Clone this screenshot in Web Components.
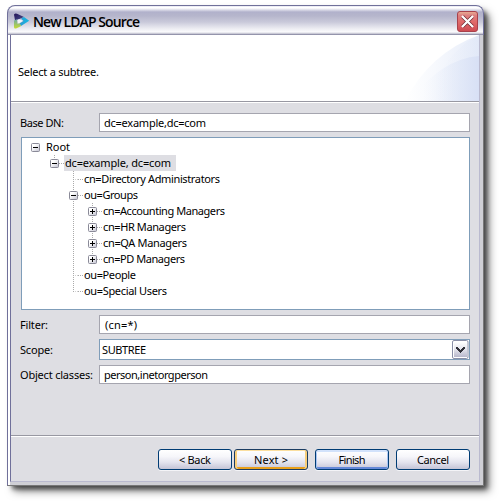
<!DOCTYPE html>
<html lang="en">
<head>
<meta charset="utf-8">
<title>New LDAP Source</title>
<style>
html,body{margin:0;height:100%;overflow:hidden;background:#fff}
body{font:11px/16px "Noto Sans","Liberation Sans",sans-serif;color:#000}
</style>
</head>
<body>
<ldap-dialog></ldap-dialog>
<script>
function define(name, html, ready) {
  const t = document.createElement('template');
  t.innerHTML = html;
  customElements.define(name, class extends HTMLElement {
    connectedCallback() {
      if (this.shadowRoot) return;
      this.attachShadow({mode: 'open'}).append(t.content.cloneNode(true));
      if (ready) ready.call(this, this.shadowRoot);
    }
  });
}

/* Text run set to a given width by adjusting its tracking. */
define('fit-text', `<style>:host{display:inline-block;white-space:pre;flex:none}span{display:inline-block}</style><span></span>`, function (r) {
  const s = r.querySelector('span'), w = +this.getAttribute('w'), text = this.getAttribute('text');
  s.textContent = text;
  const natural = s.getBoundingClientRect().width;
  s.style.letterSpacing = ((w - natural) / (text.length - 1)) + 'px';
  this.style.width = w + 'px';
});

define('tree-toggle', `<style>
:host{display:block;width:9px;height:9px;flex:none}svg{display:block}
.v{display:none}:host([closed]) .v{display:block}</style>
<svg width="9" height="9"><defs><linearGradient id="g" x1="0" y1="0" x2="1" y2="1"><stop offset=".3" stop-color="#fff"/><stop offset="1" stop-color="#c2c2d0"/></linearGradient></defs>
<rect x=".5" y=".5" width="8" height="8" rx="1" fill="url(#g)" stroke="#8a8a98"/><path d="M2 4h5v1H2z"/><path class="v" d="M4 2h1v5H4z"/></svg>`);

define('tree-row', `<style>
:host{display:flex;align-items:center;height:16px;padding-left:var(--indent)}
.slot{width:9px;height:9px;display:flex}
.dots{width:5px;height:1px;background:repeating-linear-gradient(90deg,#aaa 0 1px,transparent 1px 2px)}
.leaf .slot{height:1px;background:repeating-linear-gradient(90deg,#aaa 0 1px,transparent 1px 2px);clip-path:inset(0 0 0 4px)}
.row{display:flex;align-items:center}
.label{height:16px;line-height:16px;padding:0 5px 0 1px;display:flex}
:host([selected]) .label{background:#dedee3}
:host([root]) .dots{background:none}
</style><div class="row"><div class="slot"></div><div class="dots"></div><div class="label"><b></b></div></div>`, function (r) {
  this.style.setProperty('--indent', (9 + Math.round(19.1 * this.getAttribute('level'))) + 'px');
  const kind = this.getAttribute('kind');
  if (kind === 'leaf') r.querySelector('.row').classList.add('leaf');
  else {
    const t = document.createElement('tree-toggle');
    if (kind === 'closed') t.setAttribute('closed', '');
    r.querySelector('.slot').append(t);
  }
  const f = document.createElement('fit-text');
  f.setAttribute('text', this.getAttribute('text'));
  f.setAttribute('w', this.getAttribute('w'));
  r.querySelector('b').replaceWith(f);
});

define('tree-view', `<style>
:host{display:block;box-sizing:border-box;height:173px;border:1px solid #7f9db9;background:#fff;padding-top:1px;position:relative}
i{position:absolute;width:1px;background:repeating-linear-gradient(#aaa 0 1px,transparent 1px 2px)}
</style><i style="left:32px;top:17px;height:4px"></i><i style="left:51px;top:33px;height:121px"></i><i style="left:70px;top:65px;height:57px"></i><div style="position:relative"><slot></slot></div>`);

define('form-row', `<style>
:host{display:grid;grid-template-columns:79px 1fr;align-items:center}
</style><b></b><slot></slot>`, function (r) {
  const f = document.createElement('fit-text');
  f.setAttribute('text', this.getAttribute('label'));
  f.setAttribute('w', this.getAttribute('w'));
  r.querySelector('b').replaceWith(f);
});

define('text-field', `<style>
:host{display:flex;align-items:center;box-sizing:border-box;height:19px;border:1px solid #a5a5af;background:#fff;padding-left:4px}
</style><slot></slot>`);

define('select-field', `<style>
:host{display:flex;align-items:center;justify-content:space-between;box-sizing:border-box;height:21px;border:1px solid #7f9db9;background:#fff;padding-left:2px}
svg{display:block}
</style><slot></slot><svg width="18" height="19"><defs><linearGradient id="g" x1="0" y1="0" x2="0" y2="1"><stop offset="0" stop-color="#fff"/><stop offset=".45" stop-color="#e6e6ee"/><stop offset="1" stop-color="#b8b8cc"/></linearGradient></defs>
<rect x="1.5" y=".5" width="15.5" height="18" rx="1.5" fill="#fff" stroke="#8a8fa8"/><rect x="3" y="2" width="13" height="15" fill="url(#g)"/>
<path d="M5 7h2v1h1v1h1v1h1v-1h1v-1h1V7h2v2h-1v1h-1v1h-1v1h-1v1h-1v-1h-1v-1H7v-1H6V9H5z" fill="#303038" shape-rendering="crispEdges"/></svg>`);

define('push-button', `<style>
:host{display:flex;align-items:center;justify-content:center;box-sizing:border-box;width:74px;height:21px;border:1px solid #003c74;border-radius:3px;background:linear-gradient(#fff,#f6f6fa 35%,#e3e3ee 65%,#c4c4d6);box-shadow:0 1px #f4f4f7}
:host([tone=gold]){border-color:#1c3d63;box-shadow:inset 0 1px #fbdfa0,inset 2px 0 #f8cf7c,inset -2px 0 #f8cf7c,inset 0 -2px #e9a01c,0 1px #f4f4f7}
:host([tone=blue]){box-shadow:inset 0 2px #d2e2fb,inset 1px 0 #a8c3f2,inset -1px 0 #a8c3f2,inset 0 -2px #6488d8,0 1px #f4f4f7}
</style><slot></slot>`);

define('title-bar', `<style>
:host{display:flex;align-items:center;box-sizing:border-box;height:30px;padding:1px 5px 0 6px;border:1px solid #70709a;border-bottom:0;border-radius:8px 8px 0 0;
background:linear-gradient(#dcdcec 0,#fff 1px,#fff 2px,#d8d8e6 4px,#b1b1cb 6px,#b6b6cc 10px,#c9c9da 16px,#e9e9f0 22px,#fbfbfd 26px,#b9b9c9 28px,#70708f 29px)}
.logo{margin-right:3px}
.title{flex:1;font:600 14px/20px "Open Sans","Noto Sans",sans-serif;padding-top:1px}
svg{display:block}
</style>
<svg class="logo" width="16" height="18"><defs><linearGradient id="a" x1="0" y1="0" x2="1" y2="1"><stop offset="0" stop-color="#241458"/><stop offset="1" stop-color="#47508e"/></linearGradient><linearGradient id="b" x1="0" x2="1"><stop offset="0" stop-color="#2d9ad0"/><stop offset="1" stop-color="#13b9e4"/></linearGradient><linearGradient id="c" x1="0" y1="0" x2="0" y2="1"><stop offset="0" stop-color="#6ba9a8"/><stop offset="1" stop-color="#c8dc32"/></linearGradient></defs>
<path d="M3.2 6.5L4 12l5-3.2z" fill="#f4f4fa"/><path d="M0 2.5Q1 1 3 1.7L10 5 6.5 6.5 1 8.5z" fill="url(#a)"/><path d="M10 5l5.2 3.8L7 14 5.5 11.5 9.5 9 7 6.5z" fill="url(#b)"/><path d="M0 8.5l3-1.2.4 4.5 2.1-.5L7.3 14 2 16.5Q0 17 0 15z" fill="url(#c)"/></svg>
<div class="title"><fit-text text="New LDAP Source" w="107"></fit-text></div>
<svg width="21" height="21"><defs><linearGradient id="r" x1="0" y1="0" x2="0" y2="1"><stop offset="0" stop-color="#e8b095"/><stop offset=".2" stop-color="#dd8080"/><stop offset=".55" stop-color="#e06868"/><stop offset="1" stop-color="#cc4a52"/></linearGradient></defs>
<rect x=".5" y=".5" width="20" height="20" rx="2.5" fill="url(#r)" stroke="#a8414c"/><path d="M5.5 5.5l10 10m0-10l-10 10" stroke="#682a32" stroke-width="3.6"/><path d="M5 5l11 11m0-11L5 16" stroke="#fff" stroke-width="2.3"/></svg>`);

define('wizard-header', `<style>
:host{display:flex;justify-content:space-between;box-sizing:border-box;height:68px;background:#fff;border-bottom:1px solid #fff;padding-left:7px;box-shadow:inset 0 -1px #9898a2}
fit-text{margin-top:29px}svg{display:block}
</style><fit-text text="Select a subtree." w="81"></fit-text>
<svg width="74" height="66"><defs><linearGradient id="a"><stop offset="0" stop-color="#fff"/><stop offset=".4" stop-color="#f7f9fd"/><stop offset="1" stop-color="#e6ecf9"/></linearGradient><linearGradient id="b"><stop offset=".2" stop-color="#e9effa" stop-opacity="0"/><stop offset="1" stop-color="#d8e0f5"/></linearGradient></defs>
<path d="M0 66Q25 18 74 0V66z" fill="url(#a)"/><path d="M22 66Q40 16 74 0V66z" fill="url(#b)" opacity=".3"/><path d="M5 66Q36 24 74 21V66z" fill="url(#b)"/></svg>`);

define('ldap-dialog', `<style>
:host{display:block;box-sizing:border-box;width:499px;height:501px;padding:5px 0 0 7px}
.win{display:flex;flex-direction:column;width:477px;height:481px;border-radius:8px 8px 0 0;box-shadow:4px 4px 4px -1px rgba(0,0,0,.5),6px 6px 8px -1px rgba(0,0,0,.5)}
.frame{flex:1;display:flex;flex-direction:column;border:solid;border-width:0 1px 1px;border-color:#70709a #777 #777 #70709a;background:linear-gradient(90deg,#fff 2px,#cfcfd5 2px)}
.client{flex:1;margin:0 3px 3px 2px;border-left:1px solid #70709a;border-right:1px solid #babacf;border-bottom:1px solid #babacf;display:flex;flex-direction:column;background:#dedee3}
.form{box-sizing:border-box;padding:10px 9px 0;display:flex;flex-direction:column;gap:5px;height:332px}
tree-view{margin-left:1px}
.buttons{box-sizing:border-box;border-top:1px solid #9898a2;box-shadow:inset 0 1px #fff;padding:13px 9px 0 0;display:flex;justify-content:flex-end;gap:7px;flex:1}
.pair{display:flex;gap:2px}
</style>
<div class="win"><title-bar></title-bar><div class="frame"><div class="client">
<wizard-header></wizard-header>
<div class="form">
<form-row label="Base DN:" w="44"><text-field><fit-text text="dc=example,dc=com" w="102"></fit-text></text-field></form-row>
<tree-view>
<tree-row level="0" kind="open" root text="Root" w="24"></tree-row>
<tree-row level="1" kind="open" selected text="dc=example, dc=com" w="106"></tree-row>
<tree-row level="2" kind="leaf" text="cn=Directory Administrators" w="136"></tree-row>
<tree-row level="2" kind="open" text="ou=Groups" w="54"></tree-row>
<tree-row level="3" kind="closed" text="cn=Accounting Managers" w="122"></tree-row>
<tree-row level="3" kind="closed" text="cn=HR Managers" w="83"></tree-row>
<tree-row level="3" kind="closed" text="cn=QA Managers" w="84"></tree-row>
<tree-row level="3" kind="closed" text="cn=PD Managers" w="82"></tree-row>
<tree-row level="2" kind="leaf" text="ou=People" w="52"></tree-row>
<tree-row level="2" kind="leaf" text="ou=Special Users" w="83"></tree-row>
</tree-view>
<form-row label="Filter:" w="28"><text-field><fit-text text="(cn=*)" w="32" style="margin-left:1px"></fit-text></text-field></form-row>
<form-row label="Scope:" w="33"><select-field><fit-text text="SUBTREE" w="44"></fit-text></select-field></form-row>
<form-row label="Object classes:" w="73"><text-field><fit-text text="person,inetorgperson" w="104"></fit-text></text-field></form-row>
</div>
<div class="buttons"><div class="pair"><push-button><fit-text text="&lt; Back" w="32"></fit-text></push-button><push-button tone="gold"><fit-text text="Next &gt;" w="34"></fit-text></push-button></div><push-button tone="blue"><fit-text text="Finish" w="27"></fit-text></push-button><push-button><fit-text text="Cancel" w="32"></fit-text></push-button></div>
</div></div></div>`);
</script>
</body>
</html>
